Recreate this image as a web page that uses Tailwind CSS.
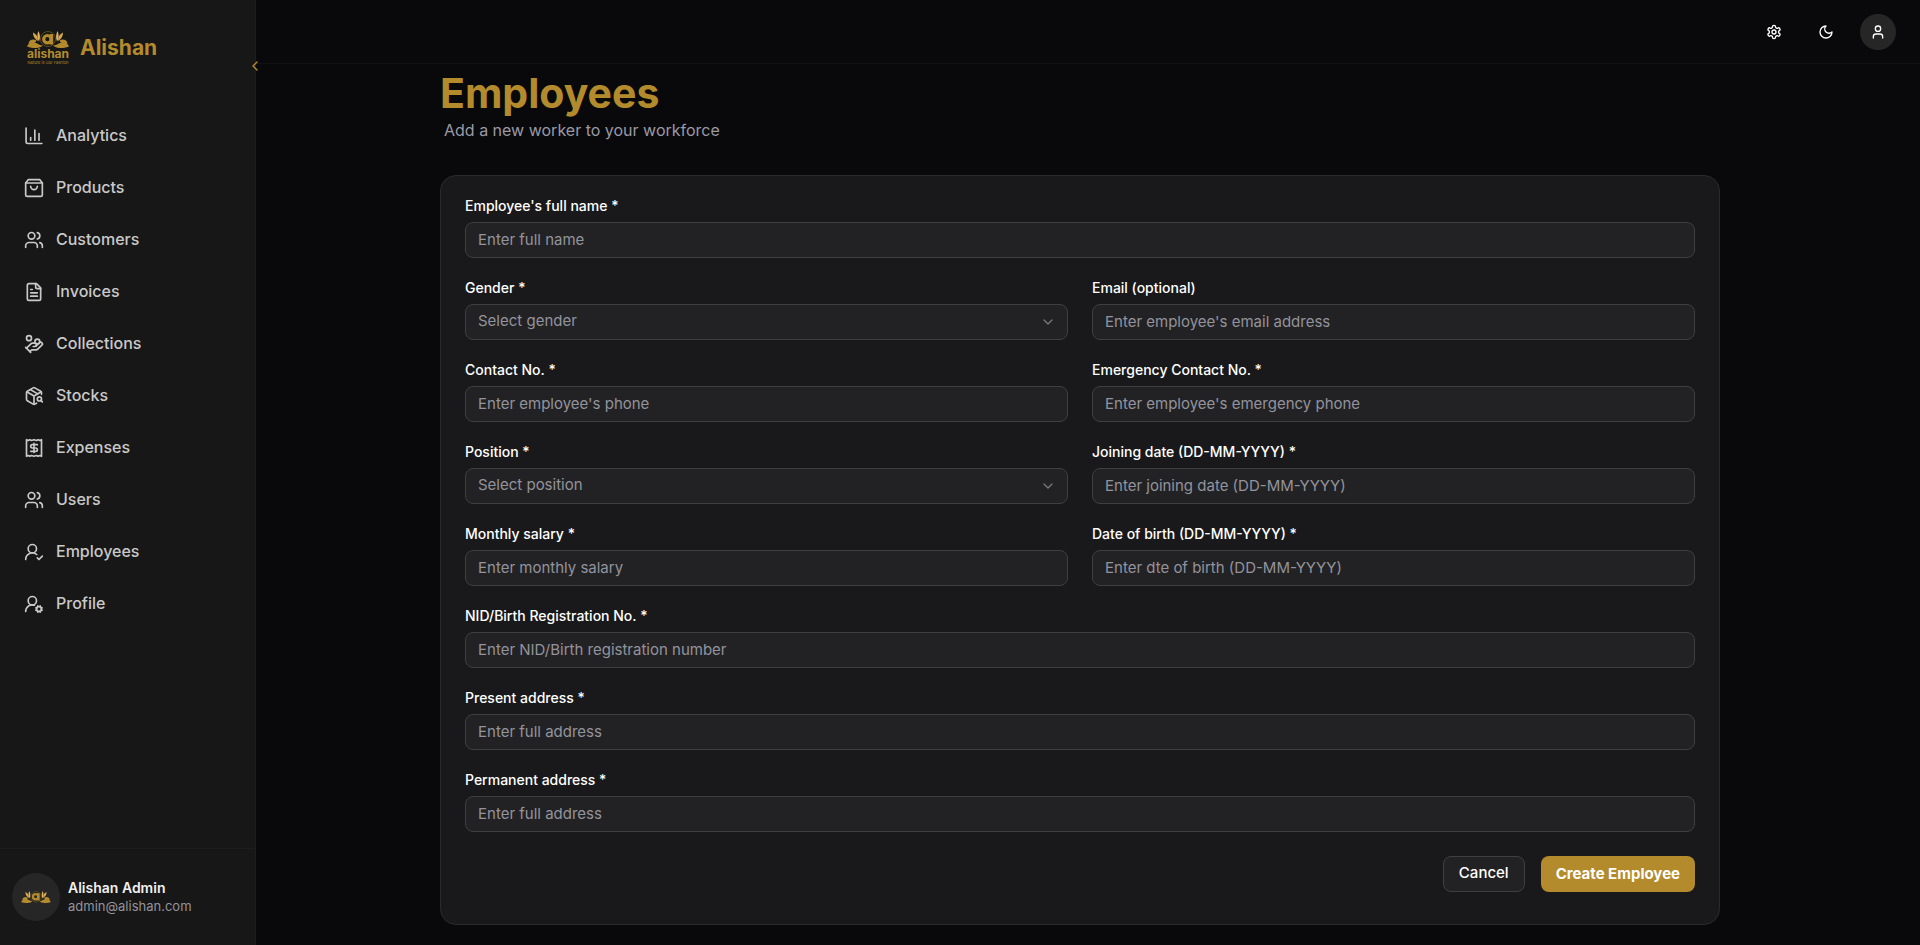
<!DOCTYPE html>
<html lang="en">
<head>
<meta charset="utf-8">
<title>Alishan – Employees</title>
<script src="https://cdn.jsdelivr.net/npm/@tailwindcss/browser@4"></script>
</head>
<body class="bg-[#09090b] font-[Inter,sans-serif] text-white">
<svg class="hidden" aria-hidden="true">
  <symbol id="crest" viewBox="0 0 42 17">
    <circle cx="21" cy="8" r="7.500" fill="none" stroke="#6e551d" stroke-width=".8"/>
    <circle cx="20.400" cy="8.200" r="3.700" fill="none" stroke="#b38b2d" stroke-width="3.200"/>
    <path d="M22.800 3h3.400v10.500h-3.400z" fill="#b38b2d"/>
    <g id="leaves">
      <path d="M0 15.500C1 12 5 10.500 8 11.500C11 12.500 13 14.500 16 14.500C12 18 5 17.500 0 15.500Z" fill="#b38b2d"/>
      <path d="M1.500 12.500C2 9 6 7.500 9.500 9.500C9 12 5 13 1.500 12.500Z" fill="#b38b2d"/>
      <path d="M6 1.500C9.500 3 11 6 11 10C7.500 8 6 5 6 1.500Z" fill="#d9a94e"/>
      <path d="M11.500 0C13 3 13.500 7 12 10.500C9.800 7 10 3 11.500 0Z" fill="#e2b565"/>
    </g>
    <use href="#leaves" transform="translate(42 0) scale(-1 1)"/>
  </symbol>
</svg>
<div class="flex min-h-screen">
  <aside class="relative flex w-64 shrink-0 flex-col border-r border-[#1d1d1f] bg-[#171717]">
    <a href="#" class="mx-6 mt-6 flex h-12 items-center gap-2 text-[#b38b2d]">
      <span class="flex w-12 flex-col items-center">
        <svg class="h-[17px] w-[42px]"><use href="#crest"/></svg>
        <span class="text-[12px] leading-3 font-bold">alishan</span>
        <span class="text-[4px] leading-[6px] whitespace-nowrap">Nature is Our Fashion</span>
      </span>
      <span class="text-[21px] font-bold">Alishan</span>
    </a>
    <button type="button" aria-label="Collapse sidebar" class="absolute top-[58px] right-[-8px] z-10 text-[#b38b2d]">
      <svg class="size-4" viewBox="0 0 24 24" fill="none" stroke="currentColor" stroke-width="2" stroke-linecap="round" stroke-linejoin="round"><path d="m15 18-6-6 6-6"/></svg>
    </button>
    <nav class="mt-10 flex flex-col gap-1 px-3 text-base font-medium text-[#c9c9c9] [&_a]:flex [&_a]:h-12 [&_a]:items-center [&_a]:gap-3 [&_a]:px-3 [&_a]:pb-[2px] [&_svg]:mt-[2px] [&_svg]:size-5 [&_svg]:fill-none [&_svg]:stroke-current [&_svg]:stroke-2 [&_svg]:[stroke-linecap:round] [&_svg]:[stroke-linejoin:round]">
      <a href="#"><svg viewBox="0 0 24 24"><path d="M2.500 2.500v16.500a2 2 0 0 0 2 2h17"/><path d="M18 17V9M13 17V5M8 17v-3"/></svg>Analytics</a>
      <a href="#"><svg viewBox="0 0 24 24"><path d="M5 2 2 6v14a2 2 0 0 0 2 2h16a2 2 0 0 0 2-2V6l-3-4Z"/><path d="M2 6h20M16 10a4 4 0 0 1-8 0"/></svg>Products</a>
      <a href="#"><svg viewBox="0 0 24 24"><path d="M16 21v-2a4 4 0 0 0-4-4H6a4 4 0 0 0-4 4v2"/><circle cx="9" cy="7" r="4"/><path d="M22 21v-2a4 4 0 0 0-3-3.870M16 3.130a4 4 0 0 1 0 7.750"/></svg>Customers</a>
      <a href="#"><svg viewBox="0 0 24 24"><path d="M15 2H6a2 2 0 0 0-2 2v16a2 2 0 0 0 2 2h12a2 2 0 0 0 2-2V7Z"/><path d="M14 2v4a2 2 0 0 0 2 2h4M10 9H8M16 13H8M16 17H8"/></svg>Invoices</a>
      <a href="#"><svg viewBox="0 0 24 24"><path d="M11 15h2a2 2 0 1 0 0-4h-3c-.6 0-1.100.2-1.400.6L3 17"/><path d="m7 21 1.600-1.400c.3-.4.8-.6 1.400-.6h4c1.100 0 2.100-.4 2.800-1.200l4.600-4.400a2 2 0 0 0-2.750-2.910l-4.200 3.900"/><path d="m2 16 6 6"/><circle cx="16" cy="9" r="2.900"/><circle cx="6" cy="5" r="3"/></svg>Collections</a>
      <a href="#"><svg viewBox="0 0 24 24"><path d="M21 10V8a2 2 0 0 0-1-1.730l-7-4a2 2 0 0 0-2 0l-7 4A2 2 0 0 0 3 8v8a2 2 0 0 0 1 1.730l7 4a2 2 0 0 0 2 0l2-1.140"/><path d="m7.500 4.270 9 5.150"/><path d="M3.290 7 12 12l8.710-5M12 22V12"/><circle cx="18.500" cy="15.500" r="2.500"/><path d="M20.270 17.270 22 19"/></svg>Stocks</a>
      <a href="#"><svg viewBox="0 0 24 24"><path d="M3 2v20l2-1 2 1 2-1 3 1 3-1 2 1 2-1 2 1V2l-2 1-2-1-2 1-3-1-3 1-2-1-2 1Z"/><path d="M16 8h-6a2 2 0 1 0 0 4h4a2 2 0 1 1 0 4H8M12 17.500v-11"/></svg>Expenses</a>
      <a href="#"><svg viewBox="0 0 24 24"><path d="M16 21v-2a4 4 0 0 0-4-4H6a4 4 0 0 0-4 4v2"/><circle cx="9" cy="7" r="4"/><path d="M22 21v-2a4 4 0 0 0-3-3.870M16 3.130a4 4 0 0 1 0 7.750"/></svg>Users</a>
      <a href="#"><svg viewBox="0 0 24 24"><path d="M2 21a8 8 0 0 1 13.292-6"/><circle cx="10" cy="8" r="5"/><path d="m16 19 2 2 4-4"/></svg>Employees</a>
      <a href="#"><svg viewBox="0 0 24 24"><path d="M2 21a8 8 0 0 1 10.434-7.620"/><circle cx="10" cy="8" r="5"/><circle cx="18" cy="18" r="3"/><path d="m19.500 14.300-.4.900M16.900 20.800l-.4.900M21.700 19.500l-.9-.4M15.200 16.900l-.9-.4M21.700 16.500l-.9.400M15.200 19.100l-.9.400M19.500 21.700l-.4-.9M16.900 15.200l-.4-.9"/></svg>Profile</a>
    </nav>
    <div class="mt-auto flex h-[97px] items-center gap-2 border-t border-[#1d1d1f] px-3">
      <span class="flex size-12 shrink-0 items-center justify-center rounded-full bg-[#262626]"><svg class="h-3 w-[30px]"><use href="#crest"/></svg></span>
      <span class="flex flex-col pb-[2px]">
        <span class="text-sm font-semibold text-[#f0f0f0]">Alishan Admin</span>
        <span class="text-[13px] leading-4 text-[#93939c]">admin@alishan.com</span>
      </span>
    </div>
  </aside>

  <div class="flex min-w-0 flex-1 flex-col">
    <header class="flex h-16 items-center justify-end gap-4 border-b border-[#111113] pr-6">
      <button type="button" aria-label="Settings" class="flex size-9 items-center justify-center"><svg class="size-4" viewBox="0 0 24 24" fill="none" stroke="currentColor" stroke-width="2" stroke-linecap="round" stroke-linejoin="round"><path d="M12.220 2h-.44a2 2 0 0 0-2 2v.18a2 2 0 0 1-1 1.730l-.43.25a2 2 0 0 1-2 0l-.15-.08a2 2 0 0 0-2.730.73l-.22.380a2 2 0 0 0 .73 2.730l.15.100a2 2 0 0 1 1 1.720v.51a2 2 0 0 1-1 1.740l-.15.090a2 2 0 0 0-.73 2.730l.22.380a2 2 0 0 0 2.730.73l.15-.08a2 2 0 0 1 2 0l.43.250a2 2 0 0 1 1 1.730V20a2 2 0 0 0 2 2h.44a2 2 0 0 0 2-2v-.18a2 2 0 0 1 1-1.730l.43-.25a2 2 0 0 1 2 0l.15.080a2 2 0 0 0 2.730-.73l.22-.39a2 2 0 0 0-.73-2.730l-.15-.08a2 2 0 0 1-1-1.740v-.5a2 2 0 0 1 1-1.740l.15-.09a2 2 0 0 0 .73-2.730l-.22-.38a2 2 0 0 0-2.730-.73l-.15.080a2 2 0 0 1-2 0l-.43-.25a2 2 0 0 1-1-1.730V4a2 2 0 0 0-2-2z"/><circle cx="12" cy="12" r="3"/></svg></button>
      <button type="button" aria-label="Dark mode" class="flex size-9 items-center justify-center"><svg class="size-4" viewBox="0 0 24 24" fill="none" stroke="currentColor" stroke-width="2" stroke-linecap="round" stroke-linejoin="round"><path d="M12 3a6 6 0 0 0 9 9 9 9 0 1 1-9-9Z"/></svg></button>
      <button type="button" aria-label="Account" class="flex size-9 items-center justify-center rounded-full bg-[#262626]"><svg class="size-4" viewBox="0 0 24 24" fill="none" stroke="currentColor" stroke-width="2" stroke-linecap="round" stroke-linejoin="round"><path d="M19 21v-2a4 4 0 0 0-4-4H9a4 4 0 0 0-4 4v2"/><circle cx="12" cy="7" r="4"/></svg></button>
    </header>
    <main class="pt-[6px] pr-4 pb-5">
      <div class="mx-auto max-w-7xl">
        <h1 class="text-[41px] leading-[46px] font-bold text-[#b38b2d]">Employees</h1>
        <p class="ml-1 text-base leading-7 text-[#9a9aa5]">Add a new worker to your workforce</p>
        <form class="mt-[31px] grid grid-cols-2 gap-6 rounded-2xl border border-[#2a2a2d] bg-[#19191b] px-6 pt-6 pb-8 [&_input]:h-9 [&_input]:w-full [&_input]:rounded-lg [&_input]:border [&_input]:border-[#3f3f42] [&_input]:bg-[#222224] [&_input]:px-3 [&_input]:pb-[2px] [&_input]:text-[15px] [&_input]:placeholder:text-[#93939d] [&_label]:mb-[10px] [&_label]:block [&_label]:text-sm [&_label]:leading-3 [&_label]:font-medium [&_select]:h-9 [&_select]:w-full [&_select]:appearance-none [&_select]:rounded-lg [&_select]:border [&_select]:border-[#3f3f42] [&_select]:bg-[#222224] [&_select]:px-3 [&_select]:pb-[2px] [&_select]:text-[15px] [&_select]:text-[#93939d]">
          <div class="col-span-2"><label for="name">Employee's full name *</label><input id="name" placeholder="Enter full name"></div>
          <div><label for="gender">Gender *</label><div class="relative"><select id="gender"><option>Select gender</option></select><svg class="pointer-events-none absolute top-[10px] right-3 size-4 text-[#77777b]" viewBox="0 0 24 24" fill="none" stroke="currentColor" stroke-width="2" stroke-linecap="round" stroke-linejoin="round"><path d="m6 9 6 6 6-6"/></svg></div></div>
          <div><label for="email">Email (optional)</label><input id="email" placeholder="Enter employee's email address"></div>
          <div><label for="phone">Contact No. *</label><input id="phone" placeholder="Enter employee's phone"></div>
          <div><label for="emergency">Emergency Contact No. *</label><input id="emergency" placeholder="Enter employee's emergency phone"></div>
          <div><label for="position">Position *</label><div class="relative"><select id="position"><option>Select position</option></select><svg class="pointer-events-none absolute top-[10px] right-3 size-4 text-[#77777b]" viewBox="0 0 24 24" fill="none" stroke="currentColor" stroke-width="2" stroke-linecap="round" stroke-linejoin="round"><path d="m6 9 6 6 6-6"/></svg></div></div>
          <div><label for="joining">Joining date (DD-MM-YYYY) *</label><input id="joining" placeholder="Enter joining date (DD-MM-YYYY)"></div>
          <div><label for="salary">Monthly salary *</label><input id="salary" placeholder="Enter monthly salary"></div>
          <div><label for="birth">Date of birth (DD-MM-YYYY) *</label><input id="birth" placeholder="Enter dte of birth (DD-MM-YYYY)"></div>
          <div class="col-span-2"><label for="nid">NID/Birth Registration No. *</label><input id="nid" placeholder="Enter NID/Birth registration number"></div>
          <div class="col-span-2"><label for="present">Present address *</label><input id="present" placeholder="Enter full address"></div>
          <div class="col-span-2"><label for="permanent">Permanent address *</label><input id="permanent" placeholder="Enter full address"></div>
          <div class="col-span-2 flex justify-end gap-4">
            <button type="button" class="h-9 rounded-lg border border-[#3f3f42] bg-[#222224] px-[15px] pb-[2px] text-[15px] font-medium">Cancel</button>
            <button type="submit" class="h-9 rounded-lg bg-[#b38b2d] px-[15px] text-[15px] font-bold">Create Employee</button>
          </div>
        </form>
      </div>
    </main>
  </div>
</div>
</body>
</html>
